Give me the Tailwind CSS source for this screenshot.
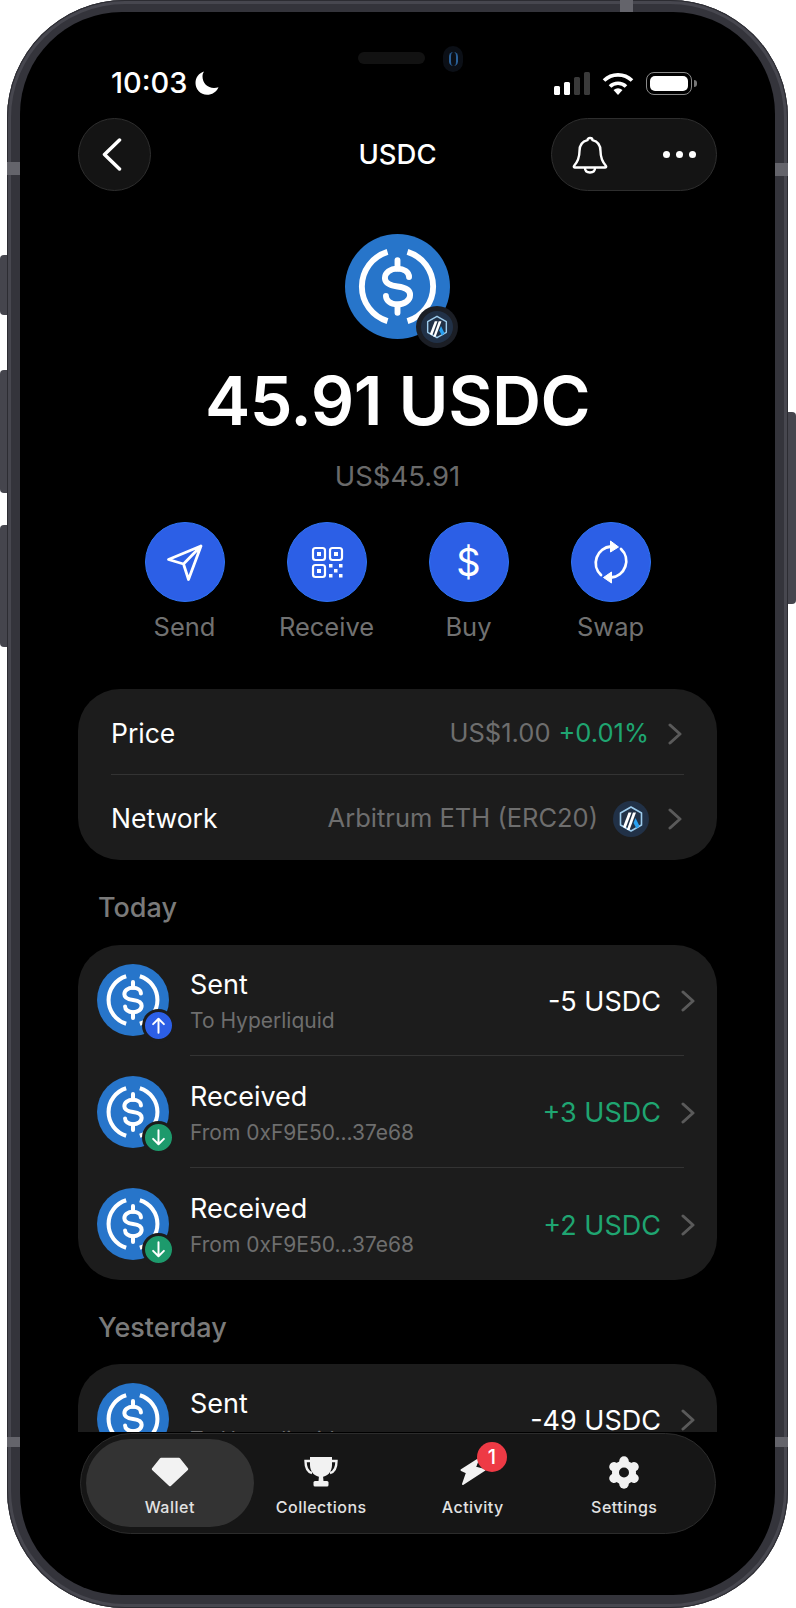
<!DOCTYPE html>
<html>
  <head>
    <meta charset="UTF-8" />
    <title>USDC</title>
    <script src="https://cdn.jsdelivr.net/npm/@tailwindcss/browser@4"></script>
  </head>
  <body class="bg-white font-['Inter',sans-serif]">
    <svg class="hidden">
      <symbol id="usdc" viewBox="0 0 100 100">
        <circle cx="50" cy="50" r="50" fill="#2775ca" />
        <g fill="none" stroke="#fff" stroke-width="5.6">
          <path d="M40.5 17A34.5 34.5 0 0 0 40.5 83" />
          <path d="M59.5 17A34.5 34.5 0 0 1 59.5 83" />
          <path stroke-linecap="round" d="M61 41C61 36 56 33 50 33C43 33 38 37 38 42C38 47 42 49 50 50C58 51 62 53 62 58C62 63 57 67 50 67C43 67 39 63 39 59" />
          <path stroke-linecap="round" d="M50 25V33M50 67V75" />
        </g>
      </symbol>
      <symbol id="arb" viewBox="0 0 36 36">
        <circle cx="18" cy="18" r="18" fill="#213147" />
        <path d="M18 6L28.5 12V24L18 30L7.500 24V12Z" fill="none" stroke="#9dcced" stroke-width="1.600" stroke-linejoin="round" />
        <path d="M15.500 11.500H18.500L12.500 27.500L10 26Z" fill="#fff" />
        <path d="M20 11.500H23L16.500 29H13.800Z" fill="#fff" />
        <path d="M22.500 17L26.500 25L23.500 27.500L20.500 22Z" fill="#28a0f0" />
      </symbol>
      <symbol id="chev" viewBox="0 0 14 22">
        <path d="M2 2L12 11L2 20" fill="none" stroke="#5a5a5a" stroke-width="3" stroke-linecap="round" stroke-linejoin="round" />
      </symbol>
      <symbol id="up" viewBox="0 0 30 30">
        <path d="M15 23V8M9 13.500L15 7.500L21 13.500" fill="none" stroke="#fff" stroke-width="2.200" stroke-linecap="round" stroke-linejoin="round" />
      </symbol>
      <symbol id="down" viewBox="0 0 30 30">
        <path d="M15 7V22M9 16.500L15 22.500L21 16.500" fill="none" stroke="#fff" stroke-width="2.200" stroke-linecap="round" stroke-linejoin="round" />
      </symbol>
    </svg>

    <!-- device frame -->
    <div class="relative w-[796px] h-[1608px] overflow-hidden">
      <div class="absolute left-0 top-[255px] w-[9px] h-[60px] rounded-l-[4px] bg-[#45454d]"></div>
      <div class="absolute left-0 top-[370px] w-[9px] h-[123px] rounded-l-[4px] bg-[#45454d]"></div>
      <div class="absolute left-0 top-[525px] w-[9px] h-[122px] rounded-l-[4px] bg-[#45454d]"></div>
      <div class="absolute right-0 top-[412px] w-[9px] h-[192px] rounded-r-[4px] bg-[#45454d]"></div>

      <div class="absolute left-[7px] top-0 w-[781px] h-[1608px] rounded-[118px] bg-[#34343b] shadow-[inset_0_0_0_1px_#2c2c32,inset_0_0_0_4px_#47474f]"></div>
      <div class="absolute left-[7px] top-[162px] w-[13px] h-[13px] bg-[#64646b]"></div>
      <div class="absolute right-[8px] top-[163px] w-[13px] h-[13px] bg-[#64646b]"></div>
      <div class="absolute left-[7px] top-[1437px] w-[13px] h-[10px] bg-[#64646b]"></div>
      <div class="absolute right-[8px] top-[1437px] w-[13px] h-[10px] bg-[#64646b]"></div>
      <div class="absolute left-[620px] top-0 w-[13px] h-[12px] bg-[#64646b]"></div>

      <!-- screen -->
      <div class="relative ml-[20px] mt-[12px] w-[755px] h-[1583px] rounded-[102px] bg-black overflow-hidden text-white">
        <!-- earpiece and camera -->
        <div class="absolute left-[338px] top-[40px] w-[67px] h-[12px] rounded-full bg-[#121212]"></div>
        <div class="absolute left-[423px] top-[34px] w-[20px] h-[26px] rounded-full bg-[#0b0f16] flex items-center justify-center">
          <div class="w-[9px] h-[14px] rounded-full border-x-2 border-[#2a5f96]"></div>
        </div>

        <div class="h-[1420px] overflow-hidden">
          <!-- status bar -->
          <div class="flex items-center justify-between h-[30px] mt-[56px] pl-[91px] pr-[78px]">
            <div class="flex items-center gap-[8px]">
              <span class="text-[29px] font-medium leading-[30px]">10:03</span>
              <svg width="24" height="24" viewBox="0 0 24 24"><path d="M9 0.500C4 2 0.500 6.500 0.500 12C0.500 18.500 5.500 23.800 12 23.800C17 23.800 21.500 20.800 23.500 16.200C22 16.800 20.500 17 19 17C12.500 17 7.500 12 7.500 5.500C7.500 3.500 8 2 9 0.500Z" fill="#fff" /></svg>
            </div>
            <div class="flex items-center gap-[12px]">
              <svg width="36" height="23" viewBox="0 0 36 23">
                <rect x="0" y="14" width="6" height="9" rx="1.500" fill="#fff" />
                <rect x="10" y="10" width="6" height="13" rx="1.500" fill="#fff" />
                <rect x="20" y="5" width="6" height="18" rx="1.500" fill="#3a3a3a" />
                <rect x="30" y="0" width="6" height="23" rx="1.500" fill="#3a3a3a" />
              </svg>
              <svg width="32" height="23" viewBox="0 0 32 23">
                <path d="M2 8.500A20 20 0 0 1 30 8.500" fill="none" stroke="#fff" stroke-width="3.700" />
                <path d="M8 14.500A11.500 11.500 0 0 1 24 14.500" fill="none" stroke="#fff" stroke-width="3.700" />
                <path d="M11.500 18Q16 14.500 20.500 18L16 23Z" fill="#fff" />
              </svg>
              <div class="flex items-center gap-[2px]">
                <div class="w-[46px] h-[23px] rounded-[8px] border border-[#8a8a8a] p-[3px]">
                  <div class="w-full h-full rounded-[5px] bg-white"></div>
                </div>
                <div class="w-[3px] h-[7px] rounded-r-full bg-[#777]"></div>
              </div>
            </div>
          </div>

          <!-- header -->
          <div class="flex items-center justify-between h-[73px] mt-[20px] px-[58px]">
            <div class="w-[166px]">
              <div class="w-[73px] h-[73px] rounded-full bg-[#141414] border border-[#2e2e2e] flex items-center justify-center">
                <svg class="-ml-[6px]" width="20" height="33" viewBox="0 0 20 33"><path d="M17.500 2L2.500 16.500L17.500 31" fill="none" stroke="#fff" stroke-width="3.500" stroke-linecap="round" stroke-linejoin="round" /></svg>
              </div>
            </div>
            <div class="text-[27.500px] font-medium">USDC</div>
            <div class="w-[166px] h-[73px] rounded-full bg-[#141414] border border-[#2e2e2e] flex items-center justify-between px-[20px]">
              <svg width="36" height="38" viewBox="0 0 36 38">
                <path d="M18 2C19.500 2 20.500 3 20.500 4.200C26 5.500 28.500 9.500 28.500 15C28.500 22 30 25.500 34 30C34.500 31 34 31.500 33 31.500H3C2 31.500 1.500 31 2 30C6 25.500 7.500 22 7.500 15C7.500 9.500 10 5.500 15.500 4.200C15.500 3 16.500 2 18 2Z" fill="none" stroke="#fff" stroke-width="2.400" stroke-linejoin="round" />
                <path d="M13 32C13 35 15 36.500 18 36.500C21 36.500 23 35 23 32" fill="none" stroke="#fff" stroke-width="2.400" />
              </svg>
              <div class="flex items-center gap-[6.500px]">
                <div class="w-[6.500px] h-[6.500px] rounded-full bg-white"></div>
                <div class="w-[6.500px] h-[6.500px] rounded-full bg-white"></div>
                <div class="w-[6.500px] h-[6.500px] rounded-full bg-white"></div>
              </div>
            </div>
          </div>

          <!-- token -->
          <div class="relative w-[105px] h-[105px] mt-[43px] mx-auto">
            <svg class="w-[105px] h-[105px]"><use href="#usdc" /></svg>
            <div class="absolute left-[71px] top-[72px] w-[42px] h-[42px] rounded-full bg-[#1b1e25] p-[5px]">
              <svg class="w-[32px] h-[32px]"><use href="#arb" /></svg>
            </div>
          </div>
          <div class="mt-[23px] text-center text-[68px] leading-[76px] font-semibold tracking-[-0.5px]">45.91 USDC</div>
          <div class="mt-[20px] text-center text-[27.500px] leading-[36px] text-[#6a6a6a]">US$45.91</div>

          <!-- actions -->
          <div class="grid grid-cols-4 w-[568px] mt-[28px] mx-auto">
            <div class="flex flex-col items-center">
              <div class="w-[80px] h-[80px] rounded-full bg-[#2c5fe6] border border-[#2f74f5]">
                <svg class="w-[78px] h-[78px]" viewBox="0 0 78 78">
                  <path d="M55 23L22.500 36.500L37.500 41L42.500 56.500Z M37.500 41L55 23" fill="none" stroke="#fff" stroke-width="2.800" stroke-linejoin="round" stroke-linecap="round" />
                </svg>
              </div>
              <div class="mt-[7px] mb-[1px] text-[25.500px] leading-[36px] text-[#717171]">Send</div>
            </div>
            <div class="flex flex-col items-center">
              <div class="w-[80px] h-[80px] rounded-full bg-[#2c5fe6] border border-[#2f74f5]">
                <svg class="w-[78px] h-[78px]" viewBox="0 0 78 78">
                  <g fill="none" stroke="#fff" stroke-width="2.200">
                    <rect x="25" y="25" width="12" height="12" rx="2.500" />
                    <rect x="42" y="25" width="12" height="12" rx="2.500" />
                    <rect x="25" y="42" width="12" height="12" rx="2.500" />
                  </g>
                  <g fill="#fff">
                    <rect x="29" y="29" width="4" height="4" />
                    <rect x="46" y="29" width="4" height="4" />
                    <rect x="29" y="46" width="4" height="4" />
                    <rect x="41" y="41" width="3.500" height="3.500" />
                    <rect x="51" y="41" width="3.500" height="3.500" />
                    <rect x="46" y="46" width="3.500" height="3.500" />
                    <rect x="41" y="51" width="3.500" height="3.500" />
                    <rect x="51" y="51" width="3.500" height="3.500" />
                  </g>
                </svg>
              </div>
              <div class="mt-[7px] mb-[1px] text-[25.500px] leading-[36px] text-[#717171]">Receive</div>
            </div>
            <div class="flex flex-col items-center">
              <div class="w-[80px] h-[80px] rounded-full bg-[#2c5fe6] border border-[#2f74f5] flex items-center justify-center text-[38px] font-normal leading-none">$</div>
              <div class="mt-[7px] mb-[1px] text-[25.500px] leading-[36px] text-[#717171]">Buy</div>
            </div>
            <div class="flex flex-col items-center">
              <div class="w-[80px] h-[80px] rounded-full bg-[#2c5fe6] border border-[#2f74f5]">
                <svg class="w-[78px] h-[78px]" viewBox="0 0 78 78">
                  <path d="M29 52A16.500 16.500 0 0 1 39 23.500" fill="none" stroke="#fff" stroke-width="2.800" stroke-linecap="round" />
                  <path d="M49 26A16.500 16.500 0 0 1 39 54.500" fill="none" stroke="#fff" stroke-width="2.800" stroke-linecap="round" />
                  <path d="M38.500 18L46.500 24L38.500 29Z" fill="#fff" stroke="#fff" stroke-linejoin="round" />
                  <path d="M39.500 49L31.500 54.500L39.500 60Z" fill="#fff" stroke="#fff" stroke-linejoin="round" />
                </svg>
              </div>
              <div class="mt-[7px] mb-[1px] text-[25.500px] leading-[36px] text-[#717171]">Swap</div>
            </div>
          </div>

          <!-- info card -->
          <div class="mx-[58px] mt-[43px] rounded-[42px] bg-[#1c1c1c] px-[33px] text-[26.500px]">
            <div class="flex items-center justify-between h-[86px] pt-[4px] border-b border-[#333333]">
              <span>Price</span>
              <div class="flex items-center text-[25.500px]">
                <span class="text-[#6e6e6e]">US$1.00</span>
                <span class="ml-[8px] text-[#1fa571]">+0.01%</span>
                <svg class="w-[14px] h-[22px] ml-[19px] mr-[2px]"><use href="#chev" /></svg>
              </div>
            </div>
            <div class="flex items-center justify-between h-[85px] pt-[2px]">
              <span>Network</span>
              <div class="flex items-center text-[25.500px]">
                <span class="text-[#6e6e6e]">Arbitrum ETH (ERC20)</span>
                <svg class="w-[36px] h-[36px] ml-[15px]"><use href="#arb" /></svg>
                <svg class="w-[14px] h-[22px] ml-[19px] mr-[2px]"><use href="#chev" /></svg>
              </div>
            </div>
          </div>

          <div class="mt-[30px] pl-[78px] text-[27px] leading-[36px] font-medium text-[#7a7a7a]">Today</div>

          <!-- today -->
          <div class="mx-[58px] mt-[19px] rounded-[42px] bg-[#1c1c1c] pl-[19px] pr-[22px]">
            <div class="flex items-center h-[110px]">
              <div class="relative w-[72px] h-[72px] shrink-0">
                <svg class="w-[72px] h-[72px]"><use href="#usdc" /></svg>
                <div class="absolute left-[45px] top-[45px] w-[33px] h-[33px] rounded-full bg-[#2c5fe6] border-[3px] border-[#1c1c1c]">
                  <svg class="w-[27px] h-[27px]"><use href="#up" /></svg>
                </div>
              </div>
              <div class="flex flex-1 items-center ml-[21px]">
                <div class="flex-1 pt-[3px]">
                  <div class="text-[27px] leading-[34px]">Sent</div>
                  <div class="mt-[5px] text-[21px] leading-[28px] text-[#6e6e6e]">To Hyperliquid</div>
                </div>
                <span class="mt-[4px] text-[27px]">-5 USDC</span>
                <svg class="w-[14px] h-[22px] ml-[20px] mt-[2px]"><use href="#chev" /></svg>
              </div>
            </div>
            <div class="h-px ml-[93px] mr-[11px] bg-[#333333]"></div>
            <div class="flex items-center h-[111px]">
              <div class="relative w-[72px] h-[72px] shrink-0">
                <svg class="w-[72px] h-[72px]"><use href="#usdc" /></svg>
                <div class="absolute left-[45px] top-[45px] w-[33px] h-[33px] rounded-full bg-[#1d9a6c] border-[3px] border-[#1c1c1c]">
                  <svg class="w-[27px] h-[27px]"><use href="#down" /></svg>
                </div>
              </div>
              <div class="flex flex-1 items-center ml-[21px]">
                <div class="flex-1 pt-[3px]">
                  <div class="text-[27px] leading-[34px]">Received</div>
                  <div class="mt-[5px] text-[21px] leading-[28px] text-[#6e6e6e]">From 0xF9E50...37e68</div>
                </div>
                <span class="mt-[4px] text-[27px] text-[#1fa571]">+3 USDC</span>
                <svg class="w-[14px] h-[22px] ml-[20px] mt-[2px]"><use href="#chev" /></svg>
              </div>
            </div>
            <div class="h-px ml-[93px] mr-[11px] bg-[#333333]"></div>
            <div class="flex items-center h-[112px]">
              <div class="relative w-[72px] h-[72px] shrink-0">
                <svg class="w-[72px] h-[72px]"><use href="#usdc" /></svg>
                <div class="absolute left-[45px] top-[45px] w-[33px] h-[33px] rounded-full bg-[#1d9a6c] border-[3px] border-[#1c1c1c]">
                  <svg class="w-[27px] h-[27px]"><use href="#down" /></svg>
                </div>
              </div>
              <div class="flex flex-1 items-center ml-[21px]">
                <div class="flex-1 pt-[3px]">
                  <div class="text-[27px] leading-[34px]">Received</div>
                  <div class="mt-[5px] text-[21px] leading-[28px] text-[#6e6e6e]">From 0xF9E50...37e68</div>
                </div>
                <span class="mt-[4px] text-[27px] text-[#1fa571]">+2 USDC</span>
                <svg class="w-[14px] h-[22px] ml-[20px] mt-[2px]"><use href="#chev" /></svg>
              </div>
            </div>
          </div>

          <div class="mt-[30px] pl-[78px] text-[27px] leading-[36px] font-medium text-[#7a7a7a]">Yesterday</div>

          <!-- yesterday -->
          <div class="mx-[58px] mt-[18px] rounded-[42px] bg-[#1c1c1c] pl-[19px] pr-[22px]">
            <div class="flex items-center h-[110px]">
              <div class="relative w-[72px] h-[72px] shrink-0">
                <svg class="w-[72px] h-[72px]"><use href="#usdc" /></svg>
              </div>
              <div class="flex flex-1 items-center ml-[21px]">
                <div class="flex-1 pt-[3px]">
                  <div class="text-[27px] leading-[34px]">Sent</div>
                  <div class="mt-[5px] text-[21px] leading-[28px] text-[#6e6e6e]">To Hyperliquid</div>
                </div>
                <span class="mt-[4px] text-[27px]">-49 USDC</span>
                <svg class="w-[14px] h-[22px] ml-[20px] mt-[2px]"><use href="#chev" /></svg>
              </div>
            </div>
          </div>
        </div>

        <!-- tab bar -->
        <div class="grid grid-cols-4 w-[636px] h-[101px] mt-[1px] ml-[60px] pl-[13px] pr-[15px] py-[5px] rounded-full bg-[#161616] border border-[#2c2c2c] text-[16px] font-medium tracking-[0.5px] text-[#e2e2e2]">
          <div class="flex flex-col items-center h-[88px] -mx-[8px] rounded-full bg-[#333333]">
            <div class="flex items-center justify-center h-[36px] mt-[15px]">
              <svg width="38" height="30" viewBox="0 0 38 30"><path d="M10 2H28L36 12L19 28L2 12Z" fill="#f2f2f2" stroke="#f2f2f2" stroke-width="2.500" stroke-linejoin="round" /></svg>
            </div>
            <span class="mt-[5px] leading-[24px]">Wallet</span>
          </div>
          <div class="flex flex-col items-center h-[88px]">
            <div class="flex items-center justify-center h-[36px] mt-[15px]">
              <svg width="34" height="30" viewBox="0 0 34 30">
                <path d="M6 0H28V8C28 15 23 20 17 20C11 20 6 15 6 8Z" fill="#f2f2f2" />
                <path d="M6 4H1.500C1.500 11 4 15 8 16M28 4H32.500C32.500 11 30 15 26 16" fill="none" stroke="#f2f2f2" stroke-width="2.400" />
                <path d="M15 19H19L19.500 24H14.500Z" fill="#f2f2f2" />
                <rect x="9.500" y="24" width="15" height="5.500" rx="1.500" fill="#f2f2f2" />
              </svg>
            </div>
            <span class="mt-[5px] leading-[24px]">Collections</span>
          </div>
          <div class="relative flex flex-col items-center h-[88px]">
            <div class="flex items-center justify-center h-[36px] mt-[15px]">
              <svg width="28" height="30" viewBox="0 0 28 30"><path d="M2.500 13L19 2.500L16 10.500L25.500 13L4 27L8 15.500Z" fill="#f2f2f2" stroke="#f2f2f2" stroke-width="2" stroke-linejoin="round" /></svg>
            </div>
            <span class="mt-[5px] leading-[24px]">Activity</span>
            <div class="absolute left-[80px] top-[3px] w-[30px] h-[30px] rounded-full bg-[#ee3a45] flex items-center justify-center text-[20px] tracking-normal text-white">1</div>
          </div>
          <div class="flex flex-col items-center h-[88px]">
            <div class="flex items-center justify-center h-[36px] mt-[15px]">
              <svg width="32" height="33" viewBox="0 0 32 33">
                <circle cx="16" cy="16.500" r="12" fill="#f2f2f2" />
                <g stroke="#f2f2f2" stroke-width="9.500" stroke-linecap="round">
                  <path d="M16 5V28" />
                  <path d="M6 10.750L26 22.250" />
                  <path d="M26 10.750L6 22.250" />
                </g>
                <circle cx="16" cy="16.500" r="5" fill="#161616" />
              </svg>
            </div>
            <span class="mt-[5px] leading-[24px]">Settings</span>
          </div>
        </div>
      </div>
    </div>
  </body>
</html>
